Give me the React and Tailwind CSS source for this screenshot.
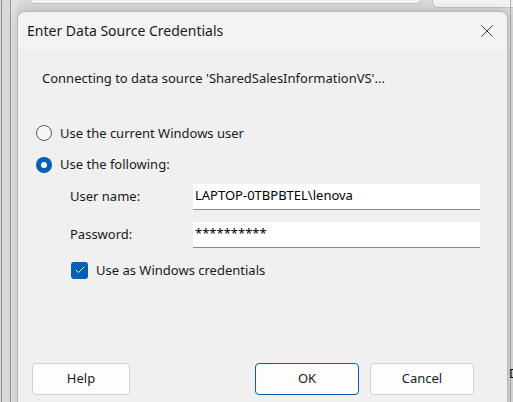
import { X, Check } from "lucide-react";

const font = { fontFamily: '"Noto Sans", "Open Sans", sans-serif' };

const Radio = ({ checked, label }) => (
  <label className="flex items-center gap-[8px] text-[13px] text-[#1a1a1a]">
    {checked ? (
      <span className="flex size-[16px] items-center justify-center rounded-full bg-[#005fb8]">
        <span className="size-[6px] rounded-full bg-white" />
      </span>
    ) : (
      <span className="size-[16px] rounded-full border border-[#5c5c5c] bg-[#f6f6f6]" />
    )}
    {label}
  </label>
);

const Field = ({ label, value }) => (
  <div className="flex items-center">
    <span className="w-[123px] text-[13px] text-[#1a1a1a]">{label}</span>
    <div className="flex h-[26px] w-[287px] items-center border-b border-[#8a8a8a] bg-white px-[2px] text-[13px] text-black">
      {value}
    </div>
  </div>
);

const Button = ({ label, primary, className }) => (
  <button
    className={
      "h-[32px] rounded-[4px] border bg-[#fdfdfd] text-[13px] text-[#1a1a1a] " +
      (primary ? "border-[#005fb8]" : "border-[#d0d0d0]") +
      " " +
      className
    }
  >
    {label}
  </button>
);

export default function App() {
  return (
    <div
      className="relative h-[402px] w-[513px] overflow-hidden bg-[#dadada]"
      style={font}
    >
      {/* window behind the dialog */}
      <div className="absolute left-[1px] top-0 h-full w-px bg-[#8c8c8c]" />
      <div className="absolute left-[10px] top-0 h-full w-px bg-[#9a9a9a]" />
      <div className="absolute left-[11px] top-0 h-full w-[6px] bg-[#e3e3e3]" />
      <div className="absolute left-[30px] top-[-10px] h-[14px] w-[391px] rounded-b-[4px] border border-[#c4c4c4] bg-[#f3f3f3]" />
      <div className="absolute left-[432px] top-[-10px] h-[18px] w-[100px] rounded-b-[6px] border border-[#c4c4c4] bg-[#f3f3f3]" />
      <div className="absolute right-[2px] top-0 h-full w-px bg-[#b0b0b0]" />
      <span className="absolute left-[509px] top-[364px] text-[13px] text-black">D</span>

      {/* dialog */}
      <div className="absolute left-[17px] top-[11px] flex h-[400px] w-[491px] flex-col rounded-t-[8px] border border-[#b9b9b9] bg-[#f0f0f0] shadow-[0_0_12px_rgba(0,0,0,0.18)]">
        <div className="flex h-[37px] items-center justify-between rounded-t-[8px] bg-[#f3f3f3] pl-[9px] pr-[9px]">
          <span className="text-[14px] text-[#1a1a1a]">Enter Data Source Credentials</span>
          <X size={22} strokeWidth={0.9} className="text-[#1a1a1a]" />
        </div>

        <div className="flex flex-1 flex-col px-[18px] pt-[20px]">
          <p className="pl-[6px] text-[13px] text-[#1a1a1a]">
            Connecting to data source 'SharedSalesInformationVS'...
          </p>

          <div className="mt-[35px] flex flex-col gap-[12px]">
            <Radio label="Use the current Windows user" />
            <Radio checked label="Use the following:" />
          </div>

          <div className="mt-[9px] flex flex-col gap-[12px] pl-[34px]">
            <Field label="User name:" value="LAPTOP-0TBPBTEL\lenova" />
            <Field label="Password:" value="**********" />
            <label className="mt-[1px] flex items-center gap-[8px] pl-[1px] text-[13px] text-[#1a1a1a]">
              <span className="flex size-[17px] items-center justify-center rounded-[3px] bg-[#005fb8]">
                <Check size={12} strokeWidth={2} className="text-white" />
              </span>
              Use as Windows credentials
            </label>
          </div>

          <div className="mt-[83px] flex items-center">
            <Button label="Help" className="ml-[-4px] w-[98px]" />
            <Button label="OK" primary className="ml-[125px] w-[104px]" />
            <Button label="Cancel" className="ml-[11px] w-[104px]" />
          </div>
        </div>
      </div>
    </div>
  );
}
